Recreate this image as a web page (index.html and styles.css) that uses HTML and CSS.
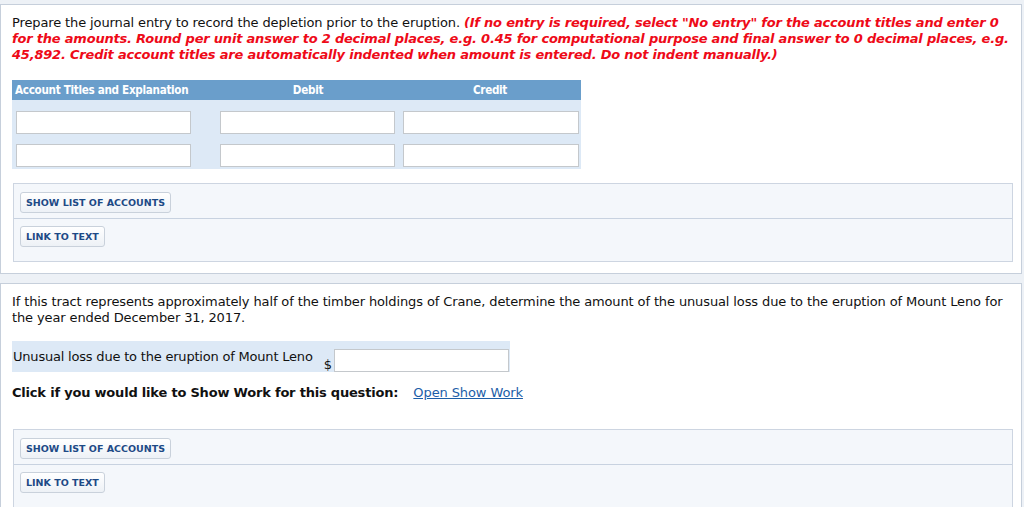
FILE: index.html
```html
<!DOCTYPE html>
<html>
<head>
<meta charset="utf-8">
<link rel="stylesheet" href="styles.css">
</head>
<body>
<div class="panel panel-top">
  <p class="question">Prepare the journal entry to record the depletion prior to the eruption. <em class="note">(If no entry is required, select "No entry" for the account titles and enter 0 for the amounts. Round per unit answer to 2 decimal places, e.g. 0.45 for computational purpose and final answer to 0 decimal places, e.g. 45,892. Credit account titles are automatically indented when amount is entered. Do not indent manually.)</em></p>
  <div class="journal">
    <div class="jhead">
      <div class="h-acct">Account Titles and Explanation</div>
      <div class="h-num">Debit</div>
      <div class="h-num">Credit</div>
    </div>
    <div class="jrow">
      <input class="in acct" type="text">
      <input class="in debit" type="text">
      <input class="in credit" type="text">
    </div>
    <div class="jrow">
      <input class="in acct" type="text">
      <input class="in debit" type="text">
      <input class="in credit" type="text">
    </div>
  </div>
  <div class="tools">
    <div class="tool-row"><button class="btn">SHOW LIST OF ACCOUNTS</button></div>
    <div class="tool-row"><button class="btn">LINK TO TEXT</button></div>
  </div>
</div>
<div class="panel panel-bottom">
  <p class="question">If this tract represents approximately half of the timber holdings of Crane, determine the amount of the unusual loss due to the eruption of Mount Leno for the year ended December 31, 2017.</p>
  <div class="answer">
    <span class="label">Unusual loss due to the eruption of Mount Leno</span>
    <span class="dollar">$</span>
    <input class="in loss" type="text">
  </div>
  <div class="showwork">
    <span class="sw-label">Click if you would like to Show Work for this question:</span>
    <a class="sw-link" href="#">Open Show Work</a>
  </div>
  <div class="tools tools-2">
    <div class="tool-row"><button class="btn">SHOW LIST OF ACCOUNTS</button></div>
    <div class="tool-row"><button class="btn">LINK TO TEXT</button></div>
  </div>
</div>
</body>
</html>
```

FILE: styles.css
```css
html, body {
  margin: 0;
  padding: 0;
}
body {
  background: #edf1f6;
  font-family: "DejaVu Sans", Verdana, sans-serif;
  font-size: 13px;
  color: #111;
  padding-top: 4px;
  height: 507px;
  overflow: hidden;
}
.panel {
  background: #fff;
  border: 1px solid #c6cfdb;
  margin-right: 2px;
  padding: 10px 11px 11px 11px;
}
.panel-bottom {
  margin-top: 9px;
  padding-bottom: 40px;
}
.question {
  margin: 0;
  line-height: 16px;
  letter-spacing: -0.12px;
}
.note {
  color: #ee0a18;
  font-weight: bold;
  letter-spacing: -0.2px;
}
.journal {
  margin-top: 17px;
  width: 569px;
  background: #dde9f6;
  padding-bottom: 2px;
}
.jhead {
  display: grid;
  grid-template-columns: 205px 182px 182px;
  background: #6a9ecb;
  color: #fff;
  font-family: "DejaVu Sans Condensed", "DejaVu Sans", sans-serif;
  font-weight: bold;
  font-size: 11.6px;
  letter-spacing: -0.3px;
  height: 20px;
  line-height: 20px;
}
.h-acct {
  padding-left: 3px;
}
.h-num {
  text-align: center;
}
.jrow {
  display: flex;
  padding: 11px 0 0 4px;
}
.jrow + .jrow {
  padding-top: 10px;
}
.in {
  box-sizing: border-box;
  height: 23px;
  border: 1px solid #c4c8cc;
  background: #fff;
  margin: 0;
  padding: 0;
}
.jrow .acct {
  width: 175px;
  margin-right: 29px;
}
.jrow .debit {
  width: 175px;
  margin-right: 8px;
}
.jrow .credit {
  width: 176px;
}
.tools {
  margin-top: 14px;
  margin-left: 1px;
  width: 998px;
  border: 1px solid #cdd5e1;
  background: #f4f7fb;
}
.tool-row {
  box-sizing: border-box;
  padding: 8px 6px 0 6px;
  height: 34px;
}
.tool-row + .tool-row {
  border-top: 1px solid #c8d2e0;
  padding-top: 7px;
  height: 43px;
}
.btn {
  display: block;
  font-family: "DejaVu Sans", Verdana, sans-serif;
  font-weight: bold;
  font-size: 9.5px;
  color: #1d4a86;
  background: linear-gradient(#ffffff, #edf1f6);
  border: 1px solid #c9d1db;
  border-radius: 3px;
  height: 21px;
  padding: 0 5px;
  margin: 0;
}
.answer {
  margin-top: 15px;
  width: 498px;
  height: 31px;
  background: #dde9f6;
  display: flex;
  align-items: flex-start;
}
.label {
  white-space: nowrap;
  padding-left: 1px;
  line-height: 16px;
  margin-top: 8px;
  letter-spacing: -0.2px;
}
.dollar {
  margin-left: 11px;
  margin-top: 16px;
  line-height: 16px;
}
.loss {
  width: 175px;
  margin-top: 8px;
  margin-left: 2px;
}
.showwork {
  margin-top: 13px;
  line-height: 16px;
}
.sw-label {
  font-weight: bold;
  letter-spacing: -0.2px;
}
.sw-link {
  color: #1c5ea8;
  text-decoration: underline;
  margin-left: 11px;
  letter-spacing: -0.1px;
}
.tools-2 {
  margin-top: 28px;
}
```
